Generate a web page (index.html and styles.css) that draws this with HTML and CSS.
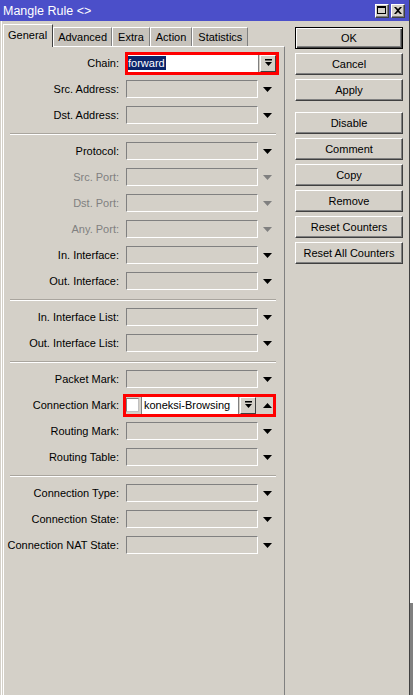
FILE: index.html
```html
<!DOCTYPE html>
<html>
<head>
<meta charset="utf-8">
<title>Mangle Rule</title>
<link rel="stylesheet" href="styles.css">
</head>
<body>
<div class="screen">
  <div class="window">
    <div class="titlebar">
      <span class="title">Mangle Rule &lt;&gt;</span>
      <div class="tbtns">
        <span class="tbtn"><svg width="9" height="8" viewBox="0 0 9 8"><rect x="0.5" y="0.5" width="8" height="7" fill="none" stroke="#000"/><rect x="0" y="0" width="9" height="2" fill="#000"/></svg></span>
        <span class="tbtn"><svg width="8" height="7" viewBox="0 0 8 7"><path d="M0 0h2l2 2 2-2h2L5 3.5 8 7H6L4 5 2 7H0l3-3.5z" fill="#000"/></svg></span>
      </div>
    </div>
    <div class="body">
      <div class="left">
        <div class="tabs">
          <div class="tab active">General</div>
          <div class="tab">Advanced</div>
          <div class="tab wide">Extra</div>
          <div class="tab wide">Action</div>
          <div class="tab wide">Statistics</div>
        </div>
        <div class="panel">
          <div class="row">
            <span class="lbl">Chain:</span>
            <div class="redbox chainbox">
              <div class="combo"><span class="sel">forward</span></div>
              <span class="ddbtn"><svg width="7" height="8" viewBox="0 0 7 8"><rect x="0" y="0" width="7" height="1.5" fill="#000"/><polygon points="0,3 7,3 3.5,7" fill="#000"/></svg></span>
            </div>
          </div>
          <div class="row">
            <span class="lbl">Src. Address:</span><span class="fld"></span>
            <svg class="arr" width="9" height="5" viewBox="0 0 9 5"><polygon points="0,0 9,0 4.5,5"/></svg>
          </div>
          <div class="row">
            <span class="lbl">Dst. Address:</span><span class="fld"></span>
            <svg class="arr" width="9" height="5" viewBox="0 0 9 5"><polygon points="0,0 9,0 4.5,5"/></svg>
          </div>
          <div class="sep"></div>
          <div class="row">
            <span class="lbl">Protocol:</span><span class="fld"></span>
            <svg class="arr" width="9" height="5" viewBox="0 0 9 5"><polygon points="0,0 9,0 4.5,5"/></svg>
          </div>
          <div class="row dis">
            <span class="lbl">Src. Port:</span><span class="fld"></span>
            <svg class="arr" width="9" height="5" viewBox="0 0 9 5"><polygon points="0,0 9,0 4.5,5"/></svg>
          </div>
          <div class="row dis">
            <span class="lbl">Dst. Port:</span><span class="fld"></span>
            <svg class="arr" width="9" height="5" viewBox="0 0 9 5"><polygon points="0,0 9,0 4.5,5"/></svg>
          </div>
          <div class="row dis">
            <span class="lbl">Any. Port:</span><span class="fld"></span>
            <svg class="arr" width="9" height="5" viewBox="0 0 9 5"><polygon points="0,0 9,0 4.5,5"/></svg>
          </div>
          <div class="row">
            <span class="lbl">In. Interface:</span><span class="fld"></span>
            <svg class="arr" width="9" height="5" viewBox="0 0 9 5"><polygon points="0,0 9,0 4.5,5"/></svg>
          </div>
          <div class="row">
            <span class="lbl">Out. Interface:</span><span class="fld"></span>
            <svg class="arr" width="9" height="5" viewBox="0 0 9 5"><polygon points="0,0 9,0 4.5,5"/></svg>
          </div>
          <div class="sep"></div>
          <div class="row">
            <span class="lbl">In. Interface List:</span><span class="fld"></span>
            <svg class="arr" width="9" height="5" viewBox="0 0 9 5"><polygon points="0,0 9,0 4.5,5"/></svg>
          </div>
          <div class="row">
            <span class="lbl">Out. Interface List:</span><span class="fld"></span>
            <svg class="arr" width="9" height="5" viewBox="0 0 9 5"><polygon points="0,0 9,0 4.5,5"/></svg>
          </div>
          <div class="sep"></div>
          <div class="row">
            <span class="lbl">Packet Mark:</span><span class="fld"></span>
            <svg class="arr" width="9" height="5" viewBox="0 0 9 5"><polygon points="0,0 9,0 4.5,5"/></svg>
          </div>
          <div class="row">
            <span class="lbl">Connection Mark:</span>
            <div class="redbox markbox">
              <span class="chk"></span>
              <div class="combo short">koneksi-Browsing</div>
              <span class="ddbtn"><svg width="7" height="8" viewBox="0 0 7 8"><rect x="0" y="0" width="7" height="1.5" fill="#000"/><polygon points="0,3 7,3 3.5,7" fill="#000"/></svg></span>
              <svg class="arr up" width="9" height="5" viewBox="0 0 9 5"><polygon points="0,5 9,5 4.5,0"/></svg>
            </div>
          </div>
          <div class="row">
            <span class="lbl">Routing Mark:</span><span class="fld"></span>
            <svg class="arr" width="9" height="5" viewBox="0 0 9 5"><polygon points="0,0 9,0 4.5,5"/></svg>
          </div>
          <div class="row">
            <span class="lbl">Routing Table:</span><span class="fld"></span>
            <svg class="arr" width="9" height="5" viewBox="0 0 9 5"><polygon points="0,0 9,0 4.5,5"/></svg>
          </div>
          <div class="sep"></div>
          <div class="row">
            <span class="lbl">Connection Type:</span><span class="fld"></span>
            <svg class="arr" width="9" height="5" viewBox="0 0 9 5"><polygon points="0,0 9,0 4.5,5"/></svg>
          </div>
          <div class="row">
            <span class="lbl">Connection State:</span><span class="fld"></span>
            <svg class="arr" width="9" height="5" viewBox="0 0 9 5"><polygon points="0,0 9,0 4.5,5"/></svg>
          </div>
          <div class="row">
            <span class="lbl">Connection NAT State:</span><span class="fld"></span>
            <svg class="arr" width="9" height="5" viewBox="0 0 9 5"><polygon points="0,0 9,0 4.5,5"/></svg>
          </div>
        </div>
      </div>
      <div class="buttons">
        <div class="btn default">OK</div>
        <div class="btn">Cancel</div>
        <div class="btn">Apply</div>
        <div class="btn gap">Disable</div>
        <div class="btn">Comment</div>
        <div class="btn">Copy</div>
        <div class="btn">Remove</div>
        <div class="btn">Reset Counters</div>
        <div class="btn">Reset All Counters</div>
      </div>
    </div>
  </div>
  <div class="behind"></div>
</div>
</body>
</html>
```

FILE: styles.css
```css
html, body {
  margin: 0;
  padding: 0;
}
body {
  font-family: "Liberation Sans", Arial, sans-serif;
  font-size: 11px;
  color: #000;
  background: #fff;
}
.screen {
  display: flex;
  width: 413px;
  height: 695px;
  overflow: hidden;
}
.window {
  width: 410px;
  flex: none;
  display: flex;
  flex-direction: column;
  background: #d4d0c8;
  border-right: 1px solid #404040;
  box-sizing: border-box;
}
.behind {
  flex: 1;
  background: linear-gradient(#ffffff 0 603px, #808080 603px);
}
.titlebar {
  height: 21px;
  flex: none;
  background: #4b4fc9;
  color: #fff;
  display: flex;
  align-items: center;
  justify-content: space-between;
  padding: 0 4px 0 3px;
}
.title {
  font-size: 12.5px;
  line-height: 14px;
}
.tbtns {
  display: flex;
  gap: 2px;
}
.tbtn {
  width: 14px;
  height: 14px;
  box-sizing: border-box;
  background: #d4d0c8;
  border: 1px solid;
  border-color: #fff #404040 #404040 #fff;
  box-shadow: inset -1px -1px #808080;
  display: flex;
  align-items: center;
  justify-content: center;
  padding-right: 1px;
  padding-bottom: 1px;
}
.tbtn svg {
  display: block;
}
.body {
  flex: 1;
  display: flex;
  box-shadow: inset 1px 0 #d4d0c8, inset 2px 0 #fff;
  min-height: 0;
}
.left {
  margin-left: 3px;
  margin-top: 3px;
  width: 282px;
  display: flex;
  flex-direction: column;
}
.tabs {
  display: flex;
  align-items: flex-end;
  height: 22px;
  flex: none;
  position: relative;
  z-index: 1;
}
.tab {
  height: 19px;
  box-sizing: border-box;
  padding: 0 4px;
  border-left: 1px solid #fff;
  border-top: 1px solid #fff;
  border-right: 1px solid #808080;
  background: #c7c3bc;
  line-height: 18px;
  white-space: nowrap;
}
.tab.wide {
  padding: 0 5px;
}
.tab.active {
  height: 23px;
  margin-bottom: -1px;
  background: #d4d0c8;
  border-right-color: #404040;
  padding: 0 5px 0 4px;
  line-height: 20px;
}
.panel {
  flex: 1;
  background: #d4d0c8;
  border-left: 1px solid #fff;
  border-top: 1px solid #fff;
  border-right: 1px solid #808080;
  padding-top: 3px;
}
.row {
  display: flex;
  align-items: center;
  height: 26px;
}
.lbl {
  width: 115px;
  flex: none;
  margin-right: 7px;
  text-align: right;
  white-space: nowrap;
}
.fld {
  width: 132px;
  height: 18px;
  flex: none;
  box-sizing: border-box;
  border: 1px solid;
  border-color: #808080 #fff #fff #808080;
}
.arr {
  display: block;
  margin-left: 5px;
  fill: #000;
}
.dis .lbl {
  color: #808080;
}
.dis .arr {
  fill: #808080;
}
.sep {
  margin: 5px 8px 3px 6px;
  border-top: 1px solid #a9a59e;
  border-bottom: 1px solid #fff;
}
.redbox {
  display: flex;
  align-items: stretch;
  height: 23px;
  box-sizing: border-box;
  border: 3px solid #ff0000;
  flex: none;
}
.chainbox {
  width: 154px;
  margin-left: -1px;
}
.markbox {
  width: 153px;
  margin-left: -3px;
  align-items: center;
}
.combo {
  width: 131px;
  box-sizing: border-box;
  background: #fff;
  border-right: 1px solid #808080;
  display: flex;
  align-items: center;
  white-space: nowrap;
  overflow: hidden;
}
.sel {
  background: #0a246a;
  color: #fff;
  line-height: 14px;
  padding-right: 1px;
}
.combo.short {
  width: 98px;
  height: 17px;
  margin-left: 2px;
  padding-left: 2px;
  border-left: 1px solid #808080;
}
.ddbtn {
  width: 16px;
  height: 17px;
  flex: none;
  margin-left: 1px;
  box-sizing: border-box;
  border: 1px solid;
  border-color: #fff #404040 #404040 #fff;
  display: flex;
  align-items: center;
  justify-content: center;
}
.ddbtn svg {
  display: block;
}
.chk {
  width: 13px;
  height: 14px;
  flex: none;
  box-sizing: border-box;
  background: #fff;
  border: 1px solid;
  border-color: #808080 #c0c0c0 #c0c0c0 #808080;
}
.arr.up {
  margin-left: 7px;
}
.buttons {
  margin-left: 10px;
  width: 108px;
  padding-top: 6px;
  display: flex;
  flex-direction: column;
  gap: 4px;
}
.btn {
  height: 22px;
  box-sizing: border-box;
  border: 1px solid;
  border-color: #fff #404040 #404040 #fff;
  box-shadow: inset -1px -1px #808080;
  text-align: center;
  line-height: 21px;
  white-space: nowrap;
}
.btn.default {
  border-color: #000;
  box-shadow: inset 1px 1px #fff, inset -1px -1px #404040, inset -2px -2px #808080;
}
.btn.gap {
  margin-top: 7px;
}
```
